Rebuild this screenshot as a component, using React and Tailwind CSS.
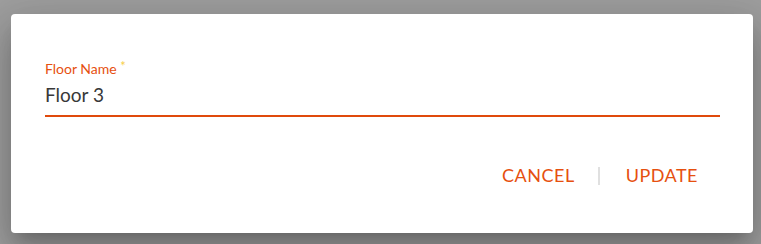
import React, { useState } from "react";

export default function App() {
  const [name, setName] = useState("Floor 3");

  return (
    <div
      className="w-[761px] h-[244px] bg-[#9e9e9e] pt-[14px] pl-[11px]"
      style={{ fontFamily: "Lato, 'Open Sans', sans-serif" }}
    >
      <div className="w-[742px] h-[219px] bg-white rounded-[4px] shadow-[0_11px_15px_-7px_rgba(0,0,0,0.2),0_24px_38px_3px_rgba(0,0,0,0.14),0_9px_46px_8px_rgba(0,0,0,0.12)] flex flex-col">
        <div className="pt-[46px] pl-[34px] pr-[33px]">
          <label className="block text-[14px] leading-[18px] text-[#e6500f]">
            Floor Name <span className="text-[13px] leading-none align-top text-[#f7ce4a]">*</span>
          </label>
          <input
            value={name}
            onChange={(e) => setName(e.target.value)}
            className="block w-full mt-[3px] h-[36px] text-[19px] text-[#383838] outline-none border-b-2 border-[#e04a0c] pb-[7px]"
          />
        </div>
        <div className="flex items-center justify-end pr-[55px] mt-[45px]">
          <button className="text-[18px] text-[#e6500f] uppercase tracking-[0.5px]">Cancel</button>
          <div className="w-[2px] h-[18px] bg-[#e0e0e0] ml-[23px] mr-[26px]" />
          <button className="text-[18px] text-[#e6500f] uppercase tracking-[0.5px]">Update</button>
        </div>
      </div>
    </div>
  );
}
